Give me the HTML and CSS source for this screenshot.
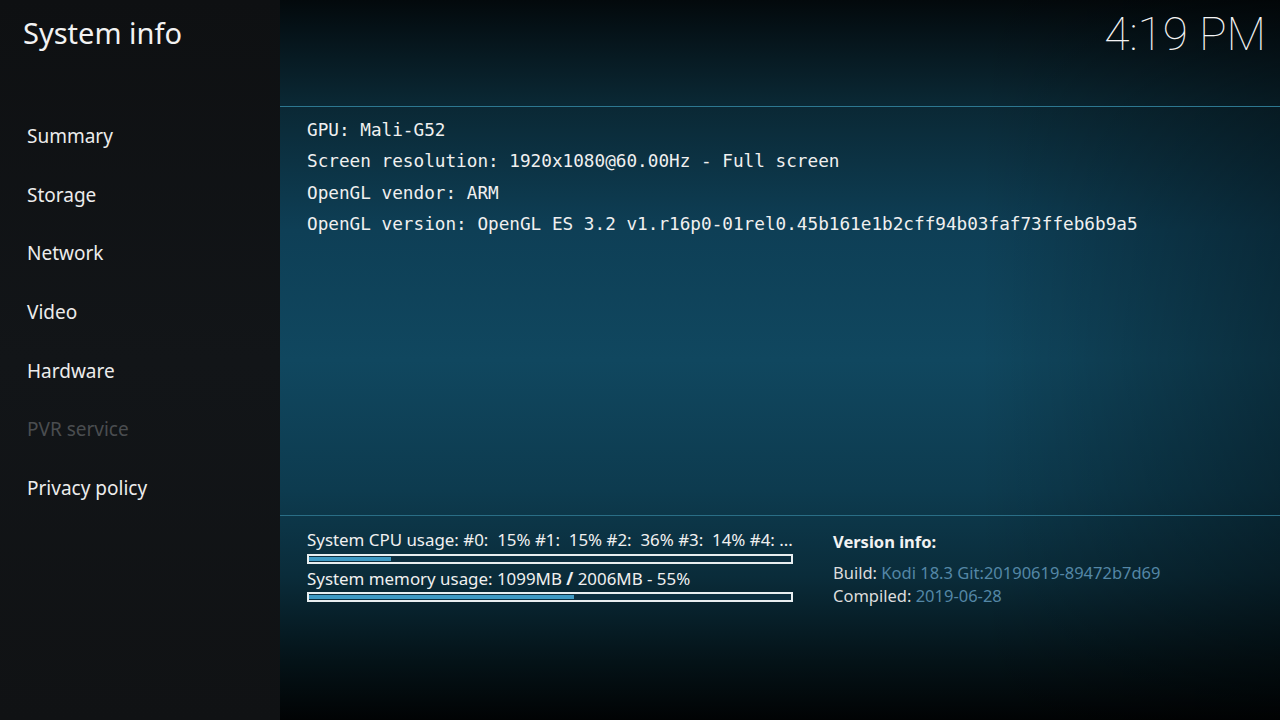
FILE: index.html
```html
<!DOCTYPE html>
<html lang="en">
<head>
<meta charset="utf-8">
<title>System info</title>
<link rel="stylesheet" href="styles.css">
</head>
<body>
<div class="screen">
  <aside class="sidebar">
    <div class="side-head"><h1 class="title">System info</h1></div>
    <nav class="menu">
      <div class="menu-item">Summary</div>
      <div class="menu-item">Storage</div>
      <div class="menu-item">Network</div>
      <div class="menu-item">Video</div>
      <div class="menu-item">Hardware</div>
      <div class="menu-item disabled">PVR service</div>
      <div class="menu-item">Privacy policy</div>
    </nav>
  </aside>
  <main class="main">
    <header class="main-head"><div class="clock">4:19 PM</div></header>
    <section class="info">
      <div class="info-line">GPU: Mali-G52</div>
      <div class="info-line">Screen resolution: 1920x1080@60.00Hz - Full screen</div>
      <div class="info-line">OpenGL vendor: ARM</div>
      <div class="info-line">OpenGL version: OpenGL ES 3.2 v1.r16p0-01rel0.45b161e1b2cff94b03faf73ffeb6b9a5</div>
    </section>
    <section class="bottom">
      <div class="usage">
        <div class="usage-label">System CPU usage: #0:  15% #1:  15% #2:  36% #3:  14% #4: ...</div>
        <div class="bar"><div class="bar-fill" style="width:17%"></div></div>
        <div class="usage-label mem">System memory usage: 1099MB <b>/</b> 2006MB - 55%</div>
        <div class="bar"><div class="bar-fill" style="width:55%"></div></div>
      </div>
      <div class="version">
        <div class="version-title">Version info:</div>
        <div class="version-row first"><span class="key">Build:</span> <span class="val">Kodi 18.3 Git:20190619-89472b7d69</span></div>
        <div class="version-row"><span class="key">Compiled:</span> <span class="val">2019-06-28</span></div>
      </div>
    </section>
  </main>
</div>
</body>
</html>
```
FILE: styles.css
```css
html, body {
  margin: 0;
  padding: 0;
  width: 1280px;
  height: 720px;
  overflow: hidden;
  background: #000;
}
.screen {
  display: flex;
  width: 1280px;
  height: 720px;
  font-family: "Noto Sans", "Open Sans", sans-serif;
  color: #eeeeee;
}
.sidebar {
  width: 280px;
  flex: none;
  background: linear-gradient(180deg, #0e1012 0%, #121518 50%, #101214 100%);
  display: flex;
  flex-direction: column;
}
.side-head {
  height: 107px;
  box-sizing: border-box;
  padding: 12px 0 0 23px;
}
.title {
  margin: 0;
  font-weight: 400;
  font-size: 29px;
  line-height: 42px;
  color: #f2f2f2;
}
.menu {
  display: flex;
  flex-direction: column;
  padding-left: 27px;
}
.menu-item {
  height: 58.67px;
  line-height: 58.67px;
  font-size: 19px;
  color: #ececec;
}
.menu-item.disabled {
  color: #4a4d50;
}
.main {
  flex: 1;
  display: flex;
  flex-direction: column;
  background:
    linear-gradient(90deg, rgba(0,0,0,0) 0%, rgba(0,0,0,0) 70%, rgba(0,0,0,0.35) 100%),
    linear-gradient(180deg, #03090c 0%, #0a2733 14%, #0e3f56 32%, #10475f 50%, #0d3b4f 68%, #0a2c3a 80%, #041217 92%, #010304 100%);
}
.main-head {
  height: 106px;
  border-bottom: 1px solid #2d7790;
  display: flex;
  justify-content: flex-end;
  align-items: flex-start;
  padding-right: 14px;
}
.clock {
  font-family: "Roboto", "Noto Sans", sans-serif;
  font-weight: 100;
  font-size: 46px;
  line-height: 54px;
  margin-top: 7px;
  color: #f4f4f4;
}
.info {
  flex: 1;
  padding: 8px 0 0 27px;
  font-family: "DejaVu Sans Mono", "Liberation Mono", monospace;
  font-size: 17.7px;
  color: #f0f0f0;
}
.info-line {
  height: 31.3px;
  line-height: 31.3px;
  white-space: pre;
}
.bottom {
  height: 205px;
  border-top: 1px solid #2a6e86;
  box-sizing: border-box;
  display: flex;
  gap: 40px;
  padding: 12px 0 0 27px;
}
.usage {
  width: 486px;
  display: flex;
  flex-direction: column;
}
.usage-label {
  font-size: 16.9px;
  line-height: 24px;
  white-space: pre;
  color: #f0f0f0;
}
.usage-label b {
  font-weight: 700;
}
.usage-label.mem {
  margin-top: 3px;
}
.bar {
  margin-top: 2px;
  height: 10px;
  box-sizing: border-box;
  border: 2px solid #e8eef0;
  background: #0c2f40;
  padding: 1px 0;
}
.usage-label.mem + .bar {
  margin-top: 1px;
}
.bar-fill {
  height: 4px;
  background: #3f9ac4;
}
.version {
  padding-top: 2px;
  font-size: 16.5px;
}
.version-title {
  font-weight: 700;
  line-height: 24px;
  color: #f2f2f2;
}
.version-row {
  line-height: 23px;
}
.version-row.first {
  margin-top: 7px;
}
.key {
  color: #dddddd;
}
.val {
  color: #5487a6;
}
```
